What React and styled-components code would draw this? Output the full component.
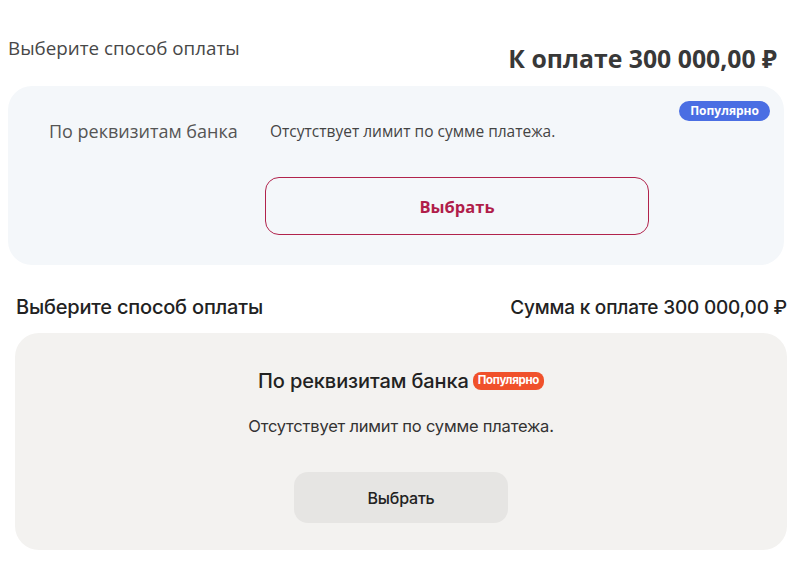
import React from "react";
import styled, { createGlobalStyle } from "styled-components";

const Global = createGlobalStyle`
  html, body { margin: 0; padding: 0; background: #fff; }
  body { width: 800px; height: 562px; overflow: hidden; }
`;

const Page = styled.div`
  display: flex;
  flex-direction: column;
  width: 800px;
`;

/* ---------- Variant A ---------- */
const SectionA = styled.section`
  display: flex;
  flex-direction: column;
  padding: 36px 16px 0 8px;
  font-family: "Open Sans", "Noto Sans", sans-serif;
`;

const HeaderA = styled.div`
  display: flex;
  justify-content: space-between;
  align-items: flex-start;
  height: 50px;
`;

const TitleA = styled.h2`
  margin: 0;
  font-size: 18.8px;
  font-weight: 400;
  color: #474747;
  line-height: 24px;
`;

const AmountA = styled.div`
  margin-top: 7px;
  margin-right: 7px;
  font-size: 24.8px;
  font-weight: 700;
  color: #383838;
  line-height: 30px;
`;

const CardA = styled.div`
  position: relative;
  display: flex;
  height: 179px;
  box-sizing: border-box;
  padding: 33px 0 0 41px;
  background: #f4f7fa;
  border-radius: 24px;
`;

const MethodA = styled.div`
  width: 216px;
  font-size: 18px;
  line-height: 24px;
  color: #555;
`;

const OptionA = styled.div`
  display: flex;
  flex-direction: column;
  align-items: flex-start;
`;

const NoteA = styled.div`
  margin-left: 5px;
  font-size: 15.5px;
  line-height: 24px;
  color: #444;
`;

const BadgeA = styled.span`
  position: absolute;
  top: 15px;
  right: 14px;
  padding: 2px 11px 2px;
  border-radius: 10px;
  background: #4a6ee3;
  color: #fff;
  font-size: 12px;
  font-weight: 700;
  line-height: 16px;
`;

const ButtonA = styled.button`
  margin-top: 34px;
  width: 384px;
  height: 58px;
  border: 1.3px solid #b1234c;
  border-radius: 14px;
  background: transparent;
  color: #b01e4a;
  font-family: inherit;
  font-size: 16.5px;
  font-weight: 700;
  cursor: pointer;
`;

/* ---------- Variant B ---------- */
const SectionB = styled.section`
  display: flex;
  flex-direction: column;
  padding: 26px 13px 0 15px;
  font-family: "Inter", "Roboto", sans-serif;
`;

const HeaderB = styled.div`
  display: flex;
  justify-content: space-between;
  align-items: center;
  height: 26px;
  margin-top: 3px;
  margin-bottom: 13px;
  padding-left: 1px;
`;

const TitleB = styled.h2`
  margin: 0;
  font-size: 20px;
  font-weight: 500;
  color: #222;
  letter-spacing: -0.2px;
`;

const AmountB = styled.div`
  font-size: 19px;
  font-weight: 500;
  color: #222;
  letter-spacing: -0.2px;
`;

const CardB = styled.div`
  display: flex;
  flex-direction: column;
  align-items: center;
  height: 217px;
  box-sizing: border-box;
  padding: 36px 0 0;
  background: #f3f2f0;
  border-radius: 24px;
`;

const MethodRowB = styled.div`
  display: flex;
  align-items: center;
  gap: 4px;
`;

const MethodB = styled.div`
  font-size: 20px;
  font-weight: 500;
  color: #222;
  letter-spacing: -0.1px;
`;

const BadgeB = styled.span`
  padding: 1px 5px 2px;
  border-radius: 8px;
  background: #f0512b;
  color: #fff;
  font-size: 11.5px;
  font-weight: 700;
  line-height: 15px;
  letter-spacing: -0.3px;
`;

const NoteB = styled.div`
  margin-top: 23px;
  font-size: 16.5px;
  color: #333;
  letter-spacing: -0.2px;
`;

const ButtonB = styled.button`
  margin-top: 36px;
  width: 214px;
  height: 51px;
  border: none;
  border-radius: 14px;
  background: #e6e5e3;
  color: #222;
  font-family: inherit;
  font-size: 16px;
  font-weight: 500;
  letter-spacing: -0.2px;
  cursor: pointer;
`;

export default function App() {
  return (
    <>
      <Global />
      <Page>
        <SectionA>
          <HeaderA>
            <TitleA>Выберите способ оплаты</TitleA>
            <AmountA>К оплате 300 000,00 ₽</AmountA>
          </HeaderA>
          <CardA>
            <BadgeA>Популярно</BadgeA>
            <MethodA>По реквизитам банка</MethodA>
            <OptionA>
              <NoteA>Отсутствует лимит по сумме платежа.</NoteA>
              <ButtonA>Выбрать</ButtonA>
            </OptionA>
          </CardA>
        </SectionA>
        <SectionB>
          <HeaderB>
            <TitleB>Выберите способ оплаты</TitleB>
            <AmountB>Сумма к оплате 300 000,00 ₽</AmountB>
          </HeaderB>
          <CardB>
            <MethodRowB>
              <MethodB>По реквизитам банка</MethodB>
              <BadgeB>Популярно</BadgeB>
            </MethodRowB>
            <NoteB>Отсутствует лимит по сумме платежа.</NoteB>
            <ButtonB>Выбрать</ButtonB>
          </CardB>
        </SectionB>
      </Page>
    </>
  );
}
